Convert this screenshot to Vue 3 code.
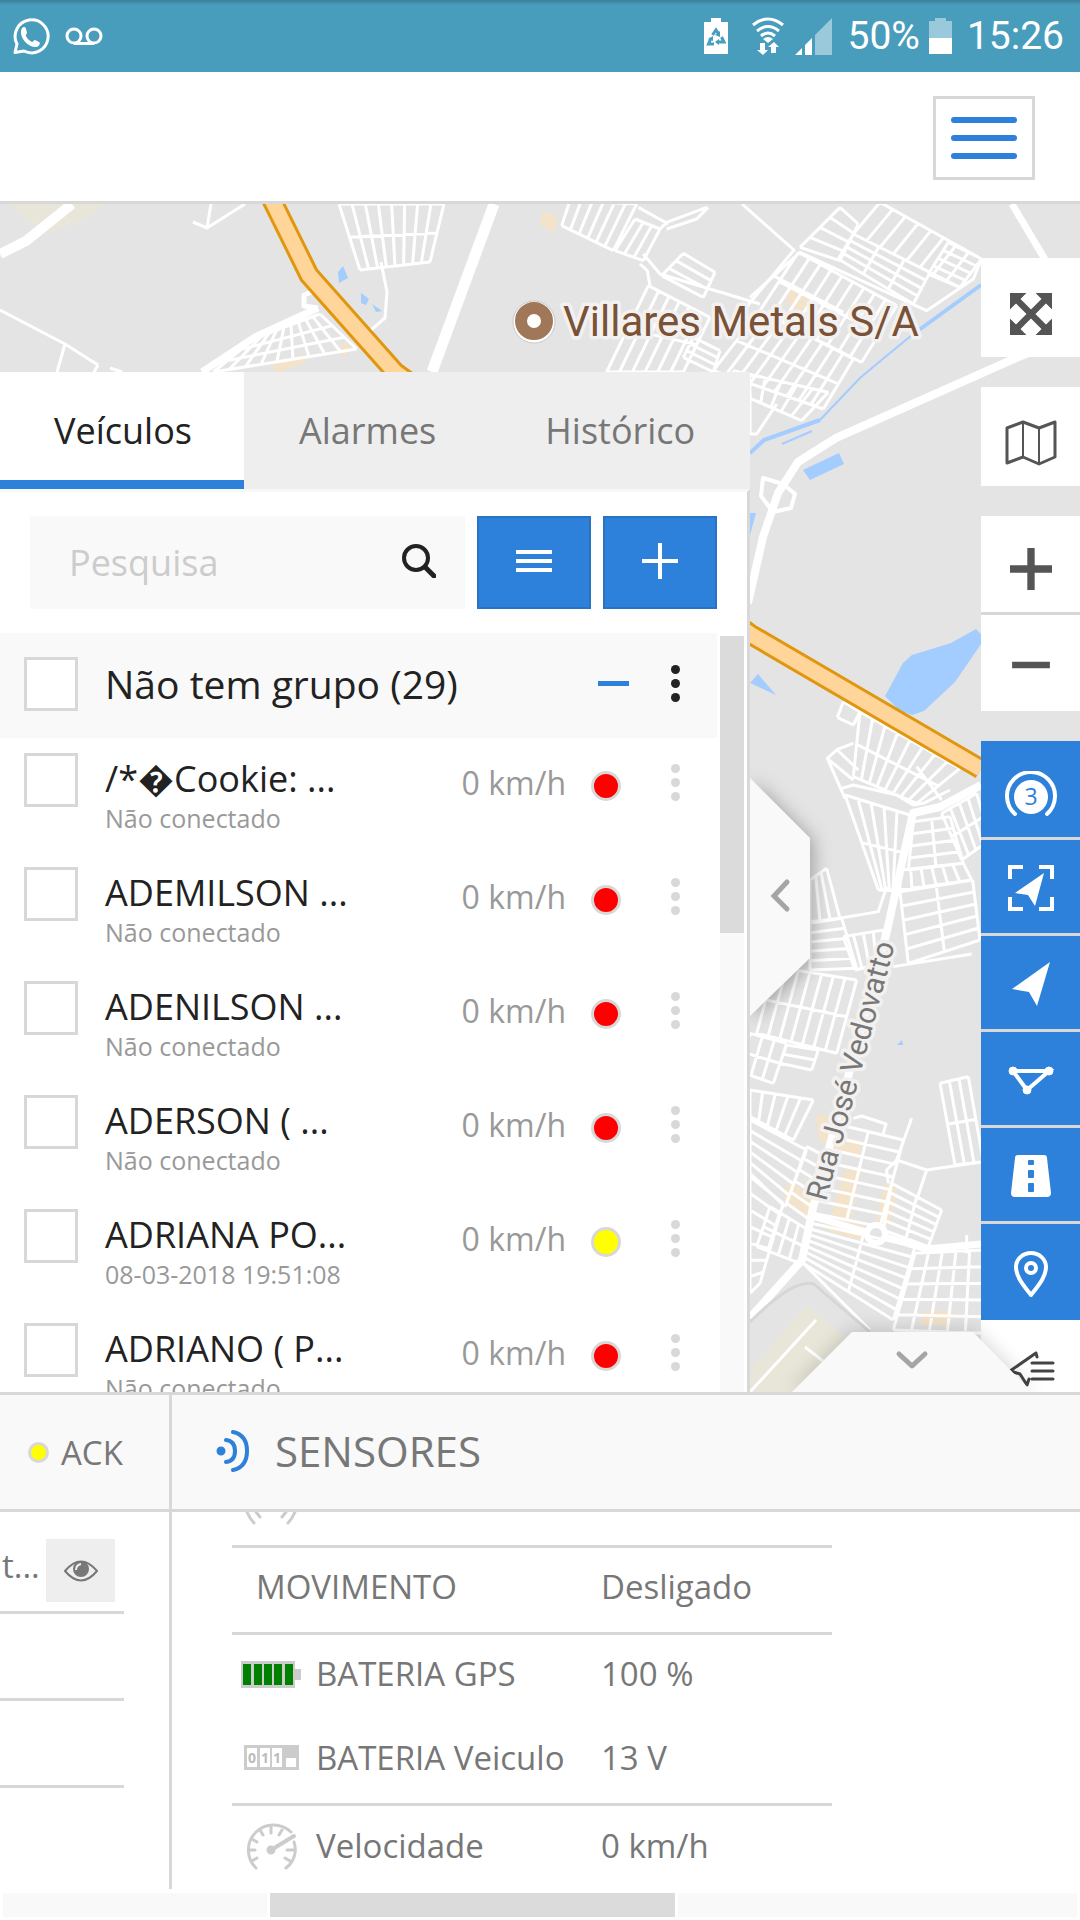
<template>
  <div class="app">
    <div class="status-bar">
      <div class="status-group">
        <svg class="icon-whatsapp" viewBox="0 0 38 38">
          <path d="M3 35.500 5 27A16.500 16.500 0 1 1 12 34z" fill="none" stroke="#fff" stroke-width="3" stroke-linejoin="round" />
          <path d="M10 11c2-2 4-1 4 1l1 4c0 1-2 2-1 3 1 3 4 5 6 6 1 0 2-2 3-2l4 2c2 1 0 4-2 5-9 1-17-9-16-16z" fill="#fff" />
        </svg>
        <svg class="icon-voicemail" viewBox="0 0 38 18" fill="none" stroke="#fff" stroke-width="3">
          <circle cx="9" cy="9" r="7" />
          <circle cx="29" cy="9" r="7" />
          <path d="M9 16.500h20" />
        </svg>
      </div>
      <div class="status-group status-right">
        <svg class="icon-saver" viewBox="0 0 24 36">
          <path d="M7 0h10v4h7v32H0V4h7z" fill="#fff" />
          <path d="M8.500 17 12 12l3 4.500M17.500 19l2.500 5h-5M10 26H4.500L7 20" fill="none" stroke="#489dbd" stroke-width="3" />
          <path d="M16 13v6l-5-2zM15 21v6l-4-3zM4 21l5-3v5z" fill="#489dbd" />
        </svg>
        <svg class="icon-wifi" viewBox="0 0 32 38">
          <g fill="none" stroke="#fff" stroke-width="3">
            <path d="M1 8q15-12 30 0" />
            <path d="M5 14q11-9 22 0" />
            <path d="M9 19q7-6 14 0" />
          </g>
          <path d="M11 22q5-4 10 0l-5 4zM8 26h5v7h3l-5 5-6-5h3zM19 36v-6h-3l6-5 5 5h-3v6z" fill="#fff" />
        </svg>
        <svg class="icon-signal" viewBox="0 0 37 37" fill="#fff">
          <path d="M0 37l7-7v7zM10 27l7-7v17h-7z" />
          <path d="M20 17 37 0v37H20z" opacity=".45" />
        </svg>
        <span class="battery-level">50%</span>
        <svg class="icon-battery" viewBox="0 0 23 36" fill="#fff">
          <path d="M6 0h11v3h6v17H0V3h6z" opacity=".45" />
          <path d="M0 20h23v16H0z" />
        </svg>
        <span>15:26</span>
      </div>
    </div>

    <header class="header">
      <button class="menu-button" aria-label="Menu">
        <span></span>
        <span></span>
        <span></span>
      </button>
    </header>

    <main class="stage">
      <svg class="map" viewBox="0 204 1080 1188" preserveAspectRatio="xMidYMid slice">
        <rect y="204" width="1080" height="1188" fill="#e4e4e4" />
        <!-- fields and squares -->
        <path d="M10 204h95q-20 18-55 28Q25 222 10 204zM807 1305l38 32-52 55h-43v-22z" fill="#e7e6d8" />
        <g fill="#f4e3cb">
          <path d="M272 364l30-10 5 8-30 12zM337 348l16-8-8 18zM542 211l16 6-4 16-14-8zM790 285l22 12-6 20-20-14z" />
          <path d="M816 1115h12l2 20 32 6-3 18-40-18zM788 1178l24 20v26l-28-26zM845 1170h16l-10 50-20-4zM884 1185h14l-8 40-14-2zM924 1311h29l-3 14h-30zM836 1219l32 8-4 14-36-10z" />
        </g>
        <!-- water -->
        <g fill="#a3ccff">
          <path d="M912 655l39-12 25-14 5 5v10l-26 38-31 29-12 4-13-5-14-14 18-33zM803 470l36-17 5 11-34 16z" />
          <path d="M750 683l8-9 18 21zM338 272l5-6 5 12-9 5zM361 293l8 6-3 6-5-2zM372 304l10 7-6 1zM750 513h6l-6 22zM897 1045l5-5 1 5z" />
        </g>
        <path d="M750 453l14-13 56-20M912 335l69-50" fill="none" stroke="#a3ccff" stroke-width="4" />
        <path d="M820 420l40-42 30-25 22-18M782 444l30-13" fill="none" stroke="#a3ccff" stroke-width="2" />
        <!-- blocks of small streets -->
        <g v-for="(district, i) in districts" :key="i" :transform="district.transform">
          <path :d="district.path" fill="none" stroke="#fff" stroke-width="9" stroke-linejoin="round" />
        </g>
        <!-- avenues -->
        <g fill="none" stroke="#fff" stroke-linejoin="round">
          <path d="M0 254l26-13 46-37" stroke-width="10" />
          <path d="M494 204l-62 168" stroke-width="11" />
          <path d="M1080 332l-64 26-180 80-38 24-20 31-15 44-15 66" stroke-width="8" />
          <path d="M1012 204l38 64" stroke-width="7" />
          <path d="M981 785l-41 22-27 6-26 118-75 281-10 48-52 58" stroke-width="8" />
          <path d="M812 1216l54 16M886 1237l40 12 55-5" stroke-width="7" />
          <path d="M202 372l53-35 63-29" stroke-width="7" />
          <path d="M318 308l-14-2v-11l8-3" stroke-width="5" />
          <path d="M0 310l65 34 33 21M65 344l-8 28M98 365l-4 7M110 368l12 4M193 222l14 6 38-24M211 204l-4 24M381 262l6 30-2 26-14 12M742 204l52 46-50 60" stroke-width="3" />
          <circle cx="876" cy="1234" r="9" stroke-width="6" />
          <path d="M763 478l20 6 12 10-4 14-18 4-12-16z" stroke-width="4" />
        </g>
        <path d="M750 1322q44-44 64-38l56 48" fill="none" stroke="#d6d6d6" stroke-width="3" />
        <path d="M750 1392l66-72M805 1347l18 14" fill="none" stroke="#fff" stroke-width="3" />
        <!-- highway -->
        <path d="M270 196l39 79 86 97 355 262 231 135" fill="none" stroke="#e0960f" stroke-width="21" />
        <path d="M270 196l39 79 86 97 355 262 231 135" fill="none" stroke="#ffd59a" stroke-width="15" />
        <!-- labels -->
        <circle cx="534" cy="322" r="21" fill="#fff" stroke="#c9c9c9" />
        <circle cx="534" cy="321" r="13" fill="none" stroke="#a1775a" stroke-width="12" />
        <text class="place-label" x="563" y="336">Villares Metals S/A</text>
        <text class="street-label" transform="translate(826 1202) rotate(-75)">Rua José Vedovatto</text>
      </svg>

      <section class="sidebar">
        <nav class="tabs">
          <button v-for="tab in tabs" :key="tab" class="tab" :class="{ active: tab === activeTab }" @click="activeTab = tab">
            {{ tab }}
          </button>
        </nav>
        <div class="toolbar">
          <div class="search">
            <input v-model="search" type="text" placeholder="Pesquisa" aria-label="Pesquisa" />
            <button class="search-button" aria-label="Buscar">
              <svg viewBox="0 0 34 34" fill="none" stroke="#222">
                <circle cx="14" cy="14" r="12" stroke-width="4" />
                <path d="M23 23l9 9" stroke-width="5" stroke-linecap="round" />
              </svg>
            </button>
          </div>
          <button class="action" aria-label="Lista">
            <svg viewBox="0 0 36 36"><path d="M0 9h36M0 18h36M0 27h36" stroke="#fff" stroke-width="4" /></svg>
          </button>
          <button class="action" aria-label="Adicionar">
            <svg viewBox="0 0 36 36"><path d="M0 18h36M18 0v36" stroke="#fff" stroke-width="4" /></svg>
          </button>
        </div>
        <div class="list-area">
          <div class="list">
            <div class="group">
              <input id="group" type="checkbox" class="check" />
              <label for="group" class="group-title">Não tem grupo (29)</label>
              <button class="toggle" aria-label="Recolher grupo"></button>
              <button class="kebab dark" aria-label="Opções do grupo"><i></i><i></i><i></i></button>
            </div>
            <div v-for="(item, index) in vehicles" :key="index" class="vehicle">
              <input :id="'vehicle-' + index" type="checkbox" class="check" />
              <label :for="'vehicle-' + index" class="vehicle-info">
                <span class="vehicle-name">{{ item.name }}</span>
                <span class="vehicle-status">{{ item.status }}</span>
              </label>
              <span class="speed">0 km/h</span>
              <span class="dot" :class="item.color"></span>
              <button class="kebab" aria-label="Opções"><i></i><i></i><i></i></button>
            </div>
          </div>
          <div class="scroll-y"><div class="thumb-y"></div></div>
        </div>
        <button class="collapse-left" aria-label="Recolher painel">
          <svg viewBox="0 0 60 238">
            <path d="M0 0l60 60v120L0 238z" fill="#f9f9f9" />
            <path d="M37 104 24 118l13 13" fill="none" stroke="#a5a5a5" stroke-width="5" stroke-linecap="round" />
          </svg>
        </button>
      </section>

      <aside class="map-tools">
        <button class="tool" aria-label="Tela cheia">
          <svg viewBox="0 0 40 40" fill="#555">
            <path d="M6 6l28 28M34 6 6 34" stroke="#555" stroke-width="6" />
            <path d="M0 0h15l-15 15zM40 0H25l15 15zM0 40h15L0 25zM40 40H25l15-15z" stroke="#555" stroke-linejoin="round" />
          </svg>
        </button>
        <button class="tool" aria-label="Mapa">
          <svg class="wide" viewBox="0 0 52 44" fill="none" stroke="#555" stroke-width="3" stroke-linejoin="round">
            <path d="M2 7l16-6 16 6 16-6v35l-16 7-16-7-16 6z" />
            <path d="M18 1v35M34 7v36" stroke-width="2" />
          </svg>
        </button>
        <div class="tool-group">
          <button class="tool" aria-label="Aumentar zoom">
            <svg viewBox="0 0 40 40"><path d="M0 20h40M20 0v40" stroke="#555" stroke-width="7" /></svg>
          </button>
          <button class="tool" aria-label="Diminuir zoom">
            <svg viewBox="0 0 40 40"><path d="M2 20h36" stroke="#555" stroke-width="6" /></svg>
          </button>
        </div>
        <div class="tool-group blue">
          <button class="tool" aria-label="Agrupar">
            <svg class="wide" viewBox="0 0 52 46">
              <path d="M10 43a24 24 0 1 1 32 0" fill="none" stroke="#fff" stroke-width="4" stroke-linecap="round" />
              <circle cx="26" cy="26" r="17" fill="#fff" />
              <text x="26" y="34" text-anchor="middle" class="cluster-count">3</text>
            </svg>
          </button>
          <button class="tool" aria-label="Enquadrar">
            <svg class="wide" viewBox="0 0 46 46">
              <path d="M2 14V2h13M31 2h13v12M44 32v12H31M15 44H2V32" fill="none" stroke="#fff" stroke-width="4" />
              <path d="M36 8 27 41l-7-11L7 28z" fill="#fff" />
            </svg>
          </button>
          <button class="tool" aria-label="Seguir">
            <svg class="wide" viewBox="0 0 46 46"><path d="M42 1 29 45 21 31 4 28z" fill="#fff" /></svg>
          </button>
          <button class="tool" aria-label="Geocercas">
            <svg class="wide" viewBox="0 0 46 46" fill="#fff" stroke="#fff">
              <path d="M5 14h36L19 33z" fill="none" stroke-width="4" />
              <circle cx="5" cy="14" r="4" />
              <circle cx="41" cy="14" r="4" />
              <circle cx="19" cy="33" r="4" />
            </svg>
          </button>
          <button class="tool" aria-label="Rotas">
            <svg class="wide" viewBox="0 0 46 46">
              <path d="M10 2h26q3 0 3 3l4 35q0 4-4 4H7q-4 0-4-4L7 5q0-3 3-3z" fill="#fff" />
              <path d="M21 8h4v3h-4zM21 18h4v6h-4zM21 31h4v7h-4z" fill="#2d81db" stroke="#2d81db" stroke-width="2" stroke-linejoin="round" />
            </svg>
          </button>
          <button class="tool" aria-label="Pontos de interesse">
            <svg class="wide" viewBox="0 0 46 46" fill="none" stroke="#fff" stroke-width="4">
              <path d="M23 44C16 35 8 26 8 16a15 14 0 0 1 30 0c0 10-8 19-15 28z" stroke-linejoin="round" />
              <circle cx="23" cy="17" r="5" />
            </svg>
          </button>
          <button class="tool light" aria-label="Legenda">
            <svg class="wide" viewBox="0 0 46 46" fill="none" stroke="#444" stroke-width="3">
              <path d="M29 7l-1-4L2 21l10 3 7 11 2-6M24 13h21M24 21h21M24 29h21" stroke-linejoin="round" stroke-linecap="round" />
            </svg>
          </button>
        </div>
      </aside>

      <button class="collapse-down" aria-label="Recolher detalhes">
        <svg viewBox="0 0 240 60">
          <path d="M60 0h121l59 60H0z" fill="#f9f9f9" />
          <path d="M107 22l13 12 13-12" fill="none" stroke="#a5a5a5" stroke-width="5" stroke-linecap="round" stroke-linejoin="round" />
        </svg>
      </button>
    </main>

    <section class="details">
      <div class="detail-columns">
        <div class="device">
          <div class="detail-header device-header">
            <span class="dot small yellow"></span>
            <span>ACK</span>
          </div>
          <div class="device-body">
            <div class="device-row first">
              <span>t...</span>
              <button class="eye" aria-label="Mostrar">
                <svg viewBox="0 0 34 22">
                  <path d="M1 11q16-19 32 0-16 19-32 0z" fill="none" stroke="#777" stroke-width="2" />
                  <circle cx="17" cy="9" r="8" fill="#777" />
                  <path d="M12 10q0-5 5-6" fill="none" stroke="#eee" stroke-width="2" />
                </svg>
              </button>
            </div>
            <div class="device-row"></div>
            <div class="device-row"></div>
          </div>
        </div>
        <div class="sensors">
          <div class="detail-header sensors-header">
            <svg viewBox="0 0 34 42" fill="none" stroke="#2d81db" stroke-width="4" stroke-linecap="round">
              <circle cx="5" cy="21" r="3" fill="#2d81db" stroke-width="3" />
              <path d="M10 10q9 1 9 11t-9 11M17 2q14 3 14 19T17 40" />
            </svg>
            <h2>SENSORES</h2>
          </div>
          <div class="sensors-body">
            <table>
              <colgroup>
                <col class="name-column" />
                <col />
              </colgroup>
              <tbody>
                <tr class="cut">
                  <td colspan="2">
                    <svg viewBox="0 0 60 33" fill="none" stroke="#ccc" stroke-width="3" stroke-linecap="round">
                      <path d="M6 0q3 7 7 11M54 0q-3 7-7 11M15 0l4 5M45 0l-4 5" />
                    </svg>
                  </td>
                </tr>
                <tr v-for="sensor in sensors" :key="sensor.name" :class="{ joined: sensor.joined }">
                  <th scope="row">
                    <div class="sensor-name" :class="{ plain: !sensor.icon }">
                      <svg v-if="sensor.icon === 'battery'" viewBox="0 0 60 48">
                        <path d="M0 12h54v8h6v11h-6v8H0z" fill="#ccc" />
                        <path d="M2 15h8v21H2zM13 15h8v21h-8zM23 15h8v21h-8zM33 15h8v21h-8zM44 15h8v21h-8z" fill="#008000" />
                      </svg>
                      <svg v-else-if="sensor.icon === 'counter'" viewBox="0 0 60 48">
                        <path d="M3 12h55v25H3z" fill="#ccc" />
                        <path d="M6 15h10v19H6zM19 15h10v19H19zM31 15h10v19H31zM45 25h10v9H45z" fill="#fff" />
                        <text x="7" y="30" class="counter-digit">0</text>
                        <text x="20" y="30" class="counter-digit">1</text>
                        <text x="32" y="30" class="counter-digit">1</text>
                      </svg>
                      <svg v-else-if="sensor.icon === 'gauge'" viewBox="0 0 60 48" fill="none" stroke="#ccc" stroke-width="3" stroke-linecap="round">
                        <path d="M15 46A23 23 0 0 1 50 10M53 20a23 23 0 0 1-8 26" />
                        <path d="M30 5v6M19 8l3 5M41 8l-3 5M11 17l5 3M8 28h6M11 39l5-3M52 28h-6M49 39l-5-3" />
                        <path d="M30 28 53 14" stroke-width="4" />
                        <circle cx="30" cy="28" r="3" fill="#ccc" />
                      </svg>
                      <span>{{ sensor.name }}</span>
                    </div>
                  </th>
                  <td>{{ sensor.value }}</td>
                </tr>
              </tbody>
            </table>
          </div>
        </div>
      </div>
      <div class="scroll-x">
        <div class="track-left"></div>
        <div class="thumb-x"></div>
        <div class="track-right"></div>
      </div>
    </section>
  </div>
</template>

<script setup>
import { ref } from 'vue';

const tabs = ['Veículos', 'Alarmes', 'Histórico'];
const activeTab = ref('Veículos');
const search = ref('');

const vehicles = [
  { name: '/*\uFFFDCookie: ...', status: 'Não conectado', color: 'red' },
  { name: 'ADEMILSON ...', status: 'Não conectado', color: 'red' },
  { name: 'ADENILSON ...', status: 'Não conectado', color: 'red' },
  { name: 'ADERSON ( ...', status: 'Não conectado', color: 'red' },
  { name: 'ADRIANA PO...', status: '08-03-2018 19:51:08', color: 'yellow' },
  { name: 'ADRIANO ( P...', status: 'Não conectado', color: 'red' }
];

const sensors = [
  { name: 'MOVIMENTO', value: 'Desligado' },
  { name: 'BATERIA GPS', value: '100 %', icon: 'battery', joined: true },
  { name: 'BATERIA Veiculo', value: '13 V', icon: 'counter' },
  { name: 'Velocidade', value: '0 km/h', icon: 'gauge' }
];

// street blocks: four corners clockwise, then columns and rows
const streetGrid = ([ax, ay, bx, by, cx, cy, dx, dy, cols, rows]) => {
  const mix = (from, to, t) => Math.round(from + (to - from) * t);
  let path = '';
  for (let i = 0; i <= cols; i++) {
    const t = i / cols;
    path += `M${mix(ax, bx, t)} ${mix(ay, by, t)}L${mix(dx, cx, t)} ${mix(dy, cy, t)}`;
  }
  for (let i = 0; i <= rows; i++) {
    const t = i / rows;
    path += `M${mix(ax, dx, t)} ${mix(ay, dy, t)}L${mix(bx, cx, t)} ${mix(by, cy, t)}`;
  }
  return path;
};

const district = (x, y, grids, extra = '') => ({
  transform: `translate(${x} ${y}) scale(0.3333)`,
  path: grids.map(streetGrid).join('') + extra
});

const districts = [
  district(0, 204, [
    [1017, 0, 1332, 0, 1290, 174, 1080, 198, 8, 2],
    [765, 402, 960, 330, 1070, 435, 640, 504, 9, 3]
  ]),
  district(560, 204, [
    [30, -10, 230, 0, 160, 140, 5, 65, 6, 1],
    [225, 45, 300, 75, 250, 170, 165, 140, 3, 1],
    [370, 148, 465, 205, 430, 280, 305, 215, 1, 3],
    [715, 145, 1010, 305, 905, 475, 600, 320, 9, 2],
    [600, 320, 880, 465, 790, 615, 460, 500, 9, 2],
    [520, 500, 805, 565, 725, 650, 540, 570, 6, 1],
    [960, -5, 1265, 165, 1200, 250, 880, 90, 8, 1],
    [880, 90, 1110, 205, 1060, 300, 835, 165, 3, 4],
    [840, 10, 895, 60, 840, 170, 720, 130, 1, 4],
    [1165, 115, 1265, 165, 1200, 250, 1105, 210, 1, 4],
    [265, 245, 450, 340, 370, 504, 140, 504, 6, 2],
    [400, 400, 480, 440, 460, 504, 370, 460, 1, 3]
  ], 'M250 150L300 210L600 300M240 180L262 200L270 245M300 75L320 55L440 10M320 75L410 45L445 10M570 570V690H590L650 600M1265 165L1240 225L1100 320L720 145L570 280M640 215L850 325M235 10L325 60'),
  district(750, 670, [
    [280, 95, 330, 125, 310, 165, 262, 142, 1, 1],
    [330, 125, 630, 295, 500, 400, 310, 320, 8, 2],
    [285, 375, 480, 435, 440, 660, 385, 660, 5, 2],
    [490, 455, 600, 440, 640, 580, 475, 600, 2, 4],
    [575, 430, 680, 370, 720, 510, 635, 570, 4, 2],
    [450, 600, 640, 580, 665, 630, 450, 660, 6, 1],
    [450, 665, 668, 630, 690, 810, 475, 880, 2, 5],
    [180, 630, 230, 595, 270, 745, 180, 755, 3, 1],
    [180, 760, 275, 745, 320, 895, 180, 900, 1, 5],
    [280, 800, 400, 780, 400, 880, 315, 900, 4, 1]
  ], 'M310 220L262 238L232 265L285 385M262 240L325 300M235 268L310 330M275 355L310 345L440 375L490 405L520 400L600 360M385 660L440 662M410 650L385 725L180 760M430 890L665 852M575 390L500 290'),
  district(750, 1000, [
    [75, -100, 320, -60, 260, 160, 20, 100, 7, 2],
    [0, 100, 110, 130, 70, 250, -30, 215, 3, 2],
    [110, 135, 205, 150, 185, 210, 90, 190, 1, 2],
    [570, 250, 655, 230, 700, 485, 615, 495, 3, 2],
    [250, 370, 460, 420, 390, 680, 190, 640, 2, 7],
    [425, 550, 575, 630, 535, 740, 400, 690, 2, 5],
    [185, 670, 495, 740, 430, 960, 160, 790, 2, 7],
    [0, 270, 190, 300, 130, 420, 0, 350, 5, 1],
    [0, 360, 170, 450, 105, 620, 0, 520, 1, 5],
    [170, 440, 210, 460, 180, 660, 110, 610, 1, 5],
    [0, 530, 100, 610, 30, 850, 0, 880, 1, 7],
    [60, 620, 175, 690, 150, 790, 20, 740, 4, 2],
    [495, 760, 700, 750, 700, 1000, 430, 990, 5, 5]
  ], 'M310 355L335 348L408 372L400 400M485 355L440 480L410 510L415 550M440 480L530 510L700 485M530 510L500 600M650 705V760M160 790L360 990')
];
</script>

<style>
body {
  margin: 0;
}
</style>

<style scoped>
.app {
  display: flex;
  flex-direction: column;
  height: 100vh;
  background: #fff;
  color: #777;
  font-family: "Open Sans", "Noto Sans", sans-serif;
  font-size: 33px;
}

.app * {
  box-sizing: border-box;
}

button {
  display: flex;
  align-items: center;
  justify-content: center;
  padding: 0;
  border: 0;
  background: none;
  color: inherit;
  font: inherit;
  cursor: pointer;
}

svg {
  display: block;
  flex: none;
}

.status-bar {
  display: flex;
  flex: none;
  align-items: center;
  justify-content: space-between;
  height: 72px;
  padding: 0 16px 0 12px;
  background: linear-gradient(#3a7f99, #489dbd 5px);
  color: #fff;
  font-family: Roboto, sans-serif;
  font-size: 39px;
}

.status-group {
  display: flex;
  align-items: center;
  gap: 15px;
}

.icon-whatsapp,
.icon-voicemail {
  width: 38px;
}

.icon-saver {
  width: 24px;
  margin-right: 9px;
}

.icon-wifi {
  width: 32px;
  margin-right: -4px;
}

.icon-signal {
  width: 37px;
}

.icon-battery {
  width: 23px;
}

.battery-level {
  margin-right: -6px;
}

.header {
  display: flex;
  flex: none;
  align-items: center;
  justify-content: flex-end;
  height: 132px;
  padding: 3px 45px 0;
  border-bottom: 3px solid #d8d8d8;
}

.menu-button {
  flex-direction: column;
  gap: 12px;
  width: 102px;
  height: 84px;
  border: 3px solid #d8d8d8;
}

.menu-button span {
  width: 66px;
  height: 6px;
  border-radius: 3px;
  background: #2d81db;
}

.stage {
  position: relative;
  display: flex;
  flex: 1;
  align-items: stretch;
  justify-content: space-between;
  min-height: 0;
  overflow: hidden;
}

.map {
  position: absolute;
  inset: 0;
  width: 100%;
  height: 100%;
}

.place-label,
.street-label {
  font-family: Roboto, sans-serif;
  paint-order: stroke;
  stroke: #f3f1ef;
  stroke-width: 7px;
  stroke-linejoin: round;
}

.place-label {
  fill: #7a5238;
  font-size: 42px;
}

.street-label {
  fill: #777;
  font-size: 30px;
}

.sidebar {
  position: relative;
  display: flex;
  flex: 0 1 750px;
  flex-direction: column;
  min-width: 0;
  margin-top: 168px;
}

.tabs {
  display: flex;
  flex: none;
  height: 117px;
  background: #eee;
}

.tab {
  padding: 9px 54px 0 55px;
  border-bottom: 9px solid transparent;
  font-size: 36px;
}

.tab.active {
  padding: 9px 52px 0 54px;
  border-color: #2d81db;
  background: #fff;
  color: #222;
}

.toolbar {
  display: flex;
  flex: none;
  gap: 12px;
  padding: 24px 30px;
  border-top: 3px solid #f8f8f8;
  border-right: 3px solid #d8d8d8;
  background: #fff;
}

.search {
  display: flex;
  flex: 1;
  min-width: 0;
  height: 93px;
  background: #f9f9f9;
}

.search input {
  flex: 1;
  min-width: 0;
  padding: 0 0 0 39px;
  border: 0;
  outline: 0;
  background: none;
  color: #222;
  font: inherit;
  font-size: 36px;
}

.search input::placeholder {
  color: #ccc;
  opacity: 1;
}

.search-button {
  width: 93px;
  padding-bottom: 4px;
}

.search-button svg {
  width: 34px;
}

.action {
  width: 114px;
  height: 93px;
  padding-bottom: 4px;
  border: 2px solid #2a73c2;
  background: #2d81db;
}

.action svg {
  width: 36px;
}

.list-area {
  display: flex;
  flex: 1;
  min-height: 0;
  border-right: 3px solid #d8d8d8;
  background: #fff;
}

.list {
  flex: 1;
  min-width: 0;
  overflow: hidden;
}

.group {
  display: flex;
  align-items: center;
  height: 105px;
  padding: 0 21px 4px 24px;
  background: #f9f9f9;
  color: #222;
}

.check {
  flex: none;
  width: 54px;
  height: 54px;
  margin: 0 27px 0 0;
  border: 3px solid #d8d8d8;
  background: #fff;
  appearance: none;
}

.check:checked {
  background: #2d81db;
}

.group-title {
  flex: 1;
  font-size: 39px;
}

.toggle {
  width: 31px;
  height: 5px;
  background: #2d81db;
}

.kebab {
  flex-direction: column;
  flex: none;
  gap: 5px;
  width: 42px;
  height: 58px;
  margin-left: 33px;
}

.group .kebab {
  margin-left: 25px;
}

.kebab i {
  width: 9px;
  height: 9px;
  border-radius: 50%;
  background: #d8d8d8;
}

.kebab.dark i {
  background: #222;
}

.vehicle {
  display: flex;
  align-items: flex-start;
  height: 114px;
  padding: 15px 21px 0 24px;
}

.vehicle-info {
  display: flex;
  flex: 1;
  flex-direction: column;
  min-width: 0;
  white-space: nowrap;
}

.vehicle-name {
  color: #222;
  font-size: 36px;
  line-height: 52px;
}

.vehicle-status {
  color: #999;
  font-size: 25px;
  line-height: 26px;
}

.speed {
  color: #999;
  font-size: 32px;
  line-height: 60px;
}

.dot {
  flex: none;
  width: 30px;
  height: 30px;
  margin: 18px 0 0 25px;
  border: 3px solid #d8d8d8;
  border-radius: 50%;
}

.dot.small {
  width: 21px;
  height: 21px;
  margin: 0;
}

.red {
  background: #f00;
}

.yellow {
  background: #ff0;
}

.scroll-y {
  flex: none;
  width: 24px;
  margin: 3px 3px 0;
  background: #f9f9f9;
}

.thumb-y {
  height: 297px;
  background: #dbdbdb;
}

.collapse-left {
  position: absolute;
  top: 406px;
  left: 100%;
  filter: drop-shadow(3px 3px 9px rgba(0, 0, 0, 0.3));
  clip-path: inset(-20px -40px -20px 0);
}

.collapse-left svg {
  width: 60px;
}

.map-tools {
  position: relative;
  display: flex;
  flex: none;
  flex-direction: column;
  gap: 30px;
  width: 99px;
  padding-top: 54px;
}

.tool {
  flex: none;
  width: 99px;
  height: 99px;
  padding-top: 12px;
  background: #fff;
}

.tool svg {
  width: 42px;
  height: 42px;
}

.tool .wide {
  width: 52px;
  height: 46px;
}

.tool-group .tool {
  height: 96px;
  padding-top: 3px;
  border-bottom: 3px solid #d8d8d8;
}

.tool-group .tool:first-child {
  height: 99px;
  padding-top: 9px;
}

.tool-group .tool:last-child {
  border-bottom: 0;
}

.blue .tool {
  background: #2d81db;
}

.blue .tool:nth-last-child(2) {
  border-bottom: 0;
}

.blue .tool.light {
  padding-top: 9px;
  background: #fff;
}

.cluster-count {
  fill: #2d81db;
  font-size: 23px;
}

.collapse-down {
  position: absolute;
  right: 48px;
  bottom: 0;
  filter: drop-shadow(0 -3px 9px rgba(0, 0, 0, 0.15));
}

.collapse-down svg {
  width: 240px;
}

.details {
  flex: none;
}

.detail-columns {
  display: flex;
  border-top: 3px solid #d8d8d8;
}

.detail-header {
  display: flex;
  align-items: center;
  height: 117px;
  padding-bottom: 3px;
  border-bottom: 3px solid #d8d8d8;
  background: #f9f9f9;
}

.device {
  flex: none;
  width: 172px;
  border-right: 3px solid #d8d8d8;
}

.device-header {
  gap: 12px;
  padding-bottom: 0;
  padding-left: 28px;
}

.device-body {
  padding-right: 45px;
}

.device-row {
  height: 87px;
  border-bottom: 3px solid #d8d8d8;
}

.device-row.first {
  display: flex;
  justify-content: space-between;
  height: 102px;
  padding: 27px 9px 0 2px;
  line-height: 54px;
}

.eye {
  width: 69px;
  height: 63px;
  background: #eee;
}

.eye svg {
  width: 34px;
}

.sensors {
  flex: 1;
  min-width: 0;
}

.sensors-header {
  gap: 25px;
  padding-left: 44px;
}

.sensors-header svg {
  width: 34px;
}

.sensors-header h2 {
  margin: 0;
  font-size: 42px;
  font-weight: 400;
}

.sensors-body {
  height: 377px;
  padding: 0 248px 0 60px;
  overflow: hidden;
}

table {
  width: 100%;
  border-spacing: 0;
  table-layout: fixed;
}

.name-column {
  width: 369px;
}

th,
td {
  height: 87px;
  padding: 0 0 8px;
  border-bottom: 3px solid #d8d8d8;
  font-weight: 400;
  text-align: left;
  white-space: nowrap;
}

.cut td {
  height: 36px;
  padding: 0 9px;
}

.cut svg {
  width: 60px;
}

.joined th,
.joined td {
  height: 84px;
  border-bottom: 0;
}

tr:last-child th,
tr:last-child td {
  border-bottom: 0;
}

.sensor-name {
  display: flex;
  align-items: center;
  gap: 15px;
  padding-left: 9px;
}

.sensor-name.plain {
  padding-left: 24px;
}

.sensor-name svg {
  width: 60px;
}

.counter-digit {
  fill: #bbb;
  font-size: 14px;
  font-weight: 700;
}

.scroll-x {
  display: flex;
  gap: 3px;
  height: 24px;
  margin: 4px 3px 3px;
}

.track-left {
  flex: 264;
  background: #f9f9f9;
}

.thumb-x {
  flex: 405;
  background: #dbdbdb;
}

.track-right {
  flex: 399;
  background: #f9f9f9;
}
</style>
